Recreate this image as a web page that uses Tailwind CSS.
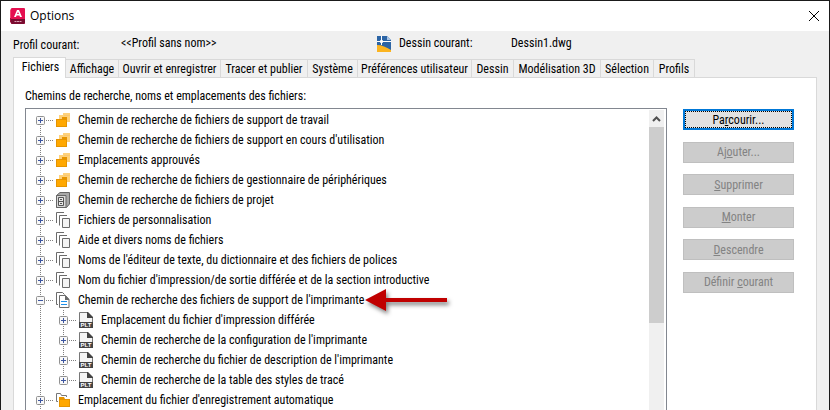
<!DOCTYPE html>
<html lang="fr">
<head>
    <meta charset="UTF-8">
    <meta name="viewport" content="width=device-width, initial-scale=1.0">
    <title>Options</title>
    <script src="https://cdn.jsdelivr.net/npm/@tailwindcss/browser@4"></script>
</head>
<body class="bg-[#f0f0f0] font-['Roboto_Condensed','Lato',sans-serif] text-[12px] leading-4 text-black">
    <!-- Icons -->
    <svg class="hidden">
        <symbol id="folders" viewBox="0 0 14 16">
            <path fill="#ffd17a" d="M3 3h4V1h7v9H3z"/>
            <path fill="#f5c878" d="M8 3h6v1H8z"/>
            <path fill="#e59400" d="M0 7h6V5h5v10H0z"/>
            <path fill="#ffa800" d="M1 8h9v6H1z"/>
        </symbol>
        <symbol id="cabinet" viewBox="0 0 14 16">
            <path fill="#a8a8a8" stroke="#666" d="M.5 3.500L4 .5h9.500v11.500L10.500 15.500H.5z"/>
            <path fill="#d9d9d9" stroke="#666" d="M.5 3.500h9.500v12H.5z"/>
            <path fill="#e8e8e8" stroke="#555" d="M2.500 5.500h5v8h-5zM2.500 9.500h5M4 7.500h2M4 11.500h2"/>
        </symbol>
        <symbol id="pages" viewBox="0 0 14 16">
            <path fill="none" stroke="#6b6b6b" d="M.5 11V.5H8M3.500 13.500V3.500H11"/>
            <path fill="#f4f4f4" stroke="#6b6b6b" d="M6.500 6.500h7v9h-7z"/>
        </symbol>
        <symbol id="pageLines" viewBox="0 0 14 16">
            <path fill="none" stroke="#6b6b6b" d="M.5 12.500V.5h6l2 2M.5 12.500H2"/>
            <path fill="#fff" stroke="#6b6b6b" d="M3.500 3.500h6l3.500 4v8H3.500z"/>
            <path fill="#6b6b6b" d="M9 3l4 4v1H9z"/>
            <path stroke="#1e90e8" d="M5 9.500h6M5 12.500h6"/>
        </symbol>
        <symbol id="plt" viewBox="0 0 14 16">
            <path fill="#f4f4f4" stroke="#777" d="M.5 10V.5h8l5 5V10"/>
            <path fill="#444" d="M8 0h1l5 5v1H8z"/>
            <path fill="#444" d="M0 10h14v6H0z"/>
            <text x="7" y="15" text-anchor="middle" font-family="Liberation Sans" font-size="6" font-weight="bold" fill="#fff">PLT</text>
        </symbol>
        <symbol id="folderOpen" viewBox="0 0 14 16">
            <path fill="none" stroke="#777" d="M2 9.500H.5V1.500h4l1 2h5V5"/>
            <path fill="#e59400" d="M3 5h5l1 2h5v8H3z"/>
            <path fill="#ffa800" d="M4 8h9v6H4z"/>
        </symbol>
    </svg>

    <div class="flex min-h-screen flex-col border-x border-t border-[#1a1a1a]">
        <!-- Title bar -->
        <header class="flex h-[30px] items-center bg-white pl-[9px] pr-[7px]">
            <svg class="h-4 w-[15px]" viewBox="0 0 15 16">
                <path fill="#a3123e" d="M0 2l2-1v15l-2-2z"/>
                <path fill="#f04a70" d="M0 2l2-1v9H0z"/>
                <rect x="1" width="14" height="16" rx="1" fill="#e51050"/>
                <path fill="#7a0c30" d="M1 11h14v4l-1 1H2l-1-1z"/>
                <path fill="#fff" fill-rule="evenodd" d="M7 2h2l3 7h-2l-.6-1.500H6.600L6 9H4zm1 2L7 6h2z"/>
                <path stroke="#d9a0b4" stroke-dasharray="2 .5" d="M4.500 13.500h7"/>
            </svg>
            <h1 class="ml-[5px] flex-1 font-['Open_Sans',sans-serif] text-[12px]">Options</h1>
            <button type="button" aria-label="Fermer" class="p-[2px]">
                <svg class="size-3" viewBox="0 0 12 12" fill="none" stroke="#000"><path d="M1 1l10 10M11 1L1 11"/></svg>
            </button>
        </header>

        <!-- Profile and drawing -->
        <div class="flex h-[26px] items-start pl-3 pt-1">
            <span class="w-[108px] pt-[2px]">Profil courant:</span>
            <span class="w-[256px]">&lt;&lt;Profil sans nom&gt;&gt;</span>
            <svg class="mt-px h-4 w-[14px]" viewBox="0 0 14 16">
                <path fill="#2b64a5" d="M0 0h10l4 4v12H0z"/>
                <path fill="#a9c4e4" d="M10 0l4 4h-4z"/>
                <path fill="#fbb420" d="M0 9c5 0 9 2 14 5v2H0z"/>
                <path stroke="#fff" fill="#2b64a5" d="M0 5.500h14M4.500 0v9M3.500 4.500h2v2h-2z"/>
            </svg>
            <span class="ml-2 w-[112px]">Dessin courant:</span>
            <span>Dessin1.dwg</span>
        </div>

        <!-- Tabs -->
        <nav role="tablist" class="z-10 ml-3 flex h-[21px] items-end whitespace-nowrap">
            <button type="button" role="tab" aria-selected="true" class="h-[21px] w-[53px] border border-b-0 border-[#d9d9d9] bg-white pb-[3px] pl-[2px]">Fichiers</button>
            <button type="button" role="tab" class="h-[19px] w-[53px] border-t border-r border-[#d9d9d9]">Affichage</button>
            <button type="button" role="tab" class="h-[19px] w-[102px] border-t border-r border-[#d9d9d9]">Ouvrir et enregistrer</button>
            <button type="button" role="tab" class="h-[19px] w-[87px] border-t border-r border-[#d9d9d9]">Tracer et publier</button>
            <button type="button" role="tab" class="h-[19px] w-[50px] border-t border-r border-[#d9d9d9]">Système</button>
            <button type="button" role="tab" class="h-[19px] w-[114px] border-t border-r border-[#d9d9d9]">Préférences utilisateur</button>
            <button type="button" role="tab" class="h-[19px] w-[42px] border-t border-r border-[#d9d9d9]">Dessin</button>
            <button type="button" role="tab" class="h-[19px] w-[87px] border-t border-r border-[#d9d9d9]">Modélisation 3D</button>
            <button type="button" role="tab" class="h-[19px] w-[53px] border-t border-r border-[#d9d9d9]">Sélection</button>
            <button type="button" role="tab" class="h-[19px] w-[41px] border-t border-r border-[#d9d9d9]">Profils</button>
        </nav>

        <!-- Tab page -->
        <main class="-mt-px mx-3 flex flex-1 flex-col border-x border-t border-[#d9d9d9] bg-white pl-[11px] pr-[22px] pt-[10px]">
            <h2 id="treeLabel">Chemins de recherche, noms et emplacements des fichiers:</h2>
            <div class="mt-1 flex flex-1 items-stretch gap-4">
                <div class="flex min-w-0 flex-1 border-x border-t border-[#828790] pr-[2px] pt-px">
                    <ul role="tree" aria-labelledby="treeLabel" class="min-w-0 flex-1 whitespace-nowrap pl-[10px]" id="tree"></ul>
                    <!-- Scrollbar -->
                    <div class="flex w-[15px] flex-col bg-[#f0f0f0]">
                        <button type="button" aria-label="Défiler vers le haut" class="flex h-[17px] items-center justify-center">
                            <svg class="h-[6px] w-[9px]" viewBox="0 0 9 6" fill="none" stroke="#505050" stroke-width="2"><path d="M1 5l3.500-3.500L8 5"/></svg>
                        </button>
                        <div class="h-[196px] bg-[#cdcdcd]"></div>
                    </div>
                </div>

                <!-- Actions -->
                <div class="mt-px flex h-[184px] w-[111px] flex-col justify-between">
                    <button type="button" class="h-[21px] border-2 border-[#0078d7] bg-[#e1e1e1]"><span class="flex h-[17px] items-center justify-center border border-dotted border-black"><span>Pa<u>r</u>courir...</span></span></button>
                    <button type="button" disabled class="h-[21px] border border-[#bfbfbf] bg-[#cccccc] text-[#838383]">Aj<u>o</u>uter...</button>
                    <button type="button" disabled class="h-[21px] border border-[#bfbfbf] bg-[#cccccc] text-[#838383]"><u>S</u>upprimer</button>
                    <button type="button" disabled class="h-[21px] border border-[#bfbfbf] bg-[#cccccc] text-[#838383]"><u>M</u>onter</button>
                    <button type="button" disabled class="h-[21px] border border-[#bfbfbf] bg-[#cccccc] text-[#838383]"><u>D</u>escendre</button>
                    <button type="button" disabled class="h-[21px] border border-[#bfbfbf] bg-[#cccccc] text-[#838383]">Définir <u>c</u>ourant</button>
                </div>
            </div>
        </main>
    </div>

    <script>
        const items = [
            { icon: 'folders', text: 'Chemin de recherche de fichiers de support de travail' },
            { icon: 'folders', text: "Chemin de recherche de fichiers de support en cours d'utilisation" },
            { icon: 'folders', text: 'Emplacements approuvés' },
            { icon: 'folders', text: 'Chemin de recherche de fichiers de gestionnaire de périphériques' },
            { icon: 'cabinet', text: 'Chemin de recherche de fichiers de projet' },
            { icon: 'pages', text: 'Fichiers de personnalisation' },
            { icon: 'pages', text: 'Aide et divers noms de fichiers' },
            { icon: 'pages', text: "Noms de l'éditeur de texte, du dictionnaire et des fichiers de polices" },
            { icon: 'pages', text: "Nom du fichier d'impression/de sortie différée et de la section introductive" },
            { icon: 'pageLines', text: "Chemin de recherche des fichiers de support de l'imprimante", marked: true, children: [
                { icon: 'plt', text: "Emplacement du fichier d'impression différée" },
                { icon: 'plt', text: "Chemin de recherche de la configuration de l'imprimante" },
                { icon: 'plt', text: "Chemin de recherche du fichier de description de l'imprimante" },
                { icon: 'plt', text: 'Chemin de recherche de la table des styles de tracé' }
            ] },
            { icon: 'folderOpen', text: "Emplacement du fichier d'enregistrement automatique" }
        ];

        const arrow = `
            <svg class="h-6 w-[90px] shrink-0 drop-shadow-[2px_3px_2px_rgba(0,0,0,0.5)]" viewBox="0 0 90 24">
                <path fill="#c00000" d="M1 12L22 1v9h61v4H22v9z"/>
            </svg>`;

        // vertical dotted line next to the expanders: full height, or cut at the first / last row
        const full = 'absolute left-1 top-0 bottom-0 w-px bg-[repeating-linear-gradient(#808080_0_1px,transparent_1px_2px)]';
        const first = 'absolute left-1 top-[10px] bottom-0 w-px bg-[repeating-linear-gradient(#808080_0_1px,transparent_1px_2px)]';
        const last = 'absolute left-1 top-0 h-[10px] w-px bg-[repeating-linear-gradient(#808080_0_1px,transparent_1px_2px)]';

        function row(item, line) {
            const sign = item.children ? 'M2 4.500h5' : 'M2 4.500h5M4.500 2v5';
            const kids = item.children
                ? `<ul role="group" class="pl-[23px]">${item.children.map((c, i, a) => row(c, i === a.length - 1 ? last : full)).join('')}</ul>`
                : '';
            return `
                <li role="treeitem" class="relative">
                    <span class="${line}"></span>
                    <div class="relative flex h-5 items-center">
                        <button type="button" aria-label="Développer ou réduire" class="size-[9px] shrink-0">
                            <svg class="size-[9px]" viewBox="0 0 9 9"><rect x=".5" y=".5" width="8" height="8" rx="1" fill="#f8f8f8" stroke="#919191"/><path stroke="#3c55a0" d="${sign}"/></svg>
                        </button>
                        <span class="ml-px mt-px h-px w-2 shrink-0 bg-[repeating-linear-gradient(90deg,#808080_0_1px,transparent_1px_2px)]"></span>
                        <svg class="ml-[2px] h-4 w-[14px] shrink-0"><use href="#${item.icon}"/></svg>
                        <span class="ml-2">${item.text}</span>
                        ${item.marked ? arrow : ''}
                    </div>
                    ${kids}
                </li>`;
        }

        document.getElementById('tree').innerHTML = items.map((item, i) => row(item, i === 0 ? first : full)).join('');
    </script>
</body>
</html>
